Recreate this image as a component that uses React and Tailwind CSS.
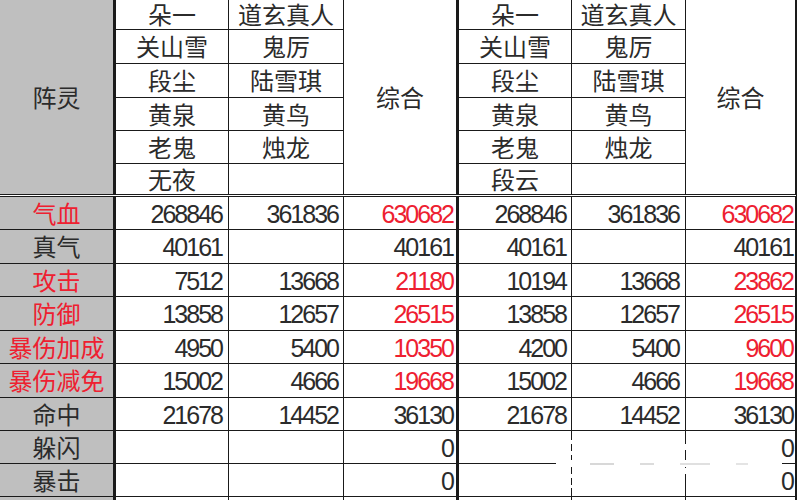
import React from "react";

const RED = "text-[#ee2030]";
const DARK = "text-[#2b2b2b]";

const headLeft = [
  ["朵一", "道玄真人"],
  ["关山雪", "鬼厉"],
  ["段尘", "陆雪琪"],
  ["黄泉", "黄鸟"],
  ["老鬼", "烛龙"],
  ["无夜", ""],
];
const headRight = [
  ["朵一", "道玄真人"],
  ["关山雪", "鬼厉"],
  ["段尘", "陆雪琪"],
  ["黄泉", "黄鸟"],
  ["老鬼", "烛龙"],
  ["段云", ""],
];

const rows = [
  ["气血", true, "268846", "361836", "630682", "268846", "361836", "630682"],
  ["真气", false, "40161", "", "40161", "40161", "", "40161"],
  ["攻击", true, "7512", "13668", "21180", "10194", "13668", "23862"],
  ["防御", true, "13858", "12657", "26515", "13858", "12657", "26515"],
  ["暴伤加成", true, "4950", "5400", "10350", "4200", "5400", "9600"],
  ["暴伤减免", true, "15002", "4666", "19668", "15002", "4666", "19668"],
  ["命中", false, "21678", "14452", "36130", "21678", "14452", "36130"],
  ["躲闪", false, "", "", "0", "", "", "0"],
  ["暴击", false, "", "", "0", "", "", "0"],
  ["", false, "", "", "", "", "", ""],
];

const PADS = ["pr-[6px]", "pr-[5px]", "pr-[3px]", "pr-[5px]", "pr-[6px]", "pr-[2px]"];

function Name({ children, row, col }) {
  return (
    <div
      className={`bg-white flex items-center justify-center text-[24px] leading-none ${DARK} pt-[3px]`}
      style={{ gridRow: row, gridColumn: col }}
    >
      {children}
    </div>
  );
}

function Num({ v, red, idx }) {
  return (
    <div
      className={`bg-white flex items-center justify-end pt-[2px] text-[25px] leading-none tracking-[-2px] ${PADS[idx]} ${
        red ? RED : DARK
      } ${idx === 2 ? "border-r-2 border-[#1a1a1a]" : ""}`}
    >
      {v}
    </div>
  );
}

export default function App() {
  return (
    <div className="relative w-[800px] h-[500px] overflow-hidden bg-white font-['Liberation_Sans','Noto_Sans_CJK_SC',sans-serif]">
      {/* header */}
      <div className="w-[797px] grid grid-cols-[115px_112px_114px_114px_112px_113px_109px] grid-rows-[29px_33px_33px_32px_32px_30px] gap-px bg-[#1a1a1a] bg-clip-padding border-r-2 border-b-[3px] border-double border-[#1a1a1a]">
        <div
          className={`bg-[#bfbfbf] border-r-2 border-[#1a1a1a] flex items-center justify-center text-[24px] leading-none pt-[3px] ${DARK}`}
          style={{ gridRow: "1 / span 6", gridColumn: 1 }}
        >
          阵灵
        </div>
        {headLeft.map((r, i) => (
          <React.Fragment key={"l" + i}>
            <Name row={i + 1} col={2}>{r[0]}</Name>
            <Name row={i + 1} col={3}>{r[1]}</Name>
          </React.Fragment>
        ))}
        <div
          className={`bg-white border-r-2 border-[#1a1a1a] flex items-center justify-center text-[24px] leading-none pt-[3px] ${DARK}`}
          style={{ gridRow: "1 / span 6", gridColumn: 4 }}
        >
          综合
        </div>
        {headRight.map((r, i) => (
          <React.Fragment key={"r" + i}>
            <Name row={i + 1} col={5}>{r[0]}</Name>
            <Name row={i + 1} col={6}>{r[1]}</Name>
          </React.Fragment>
        ))}
        <div
          className={`bg-white flex items-center justify-center text-[24px] leading-none pt-[3px] ${DARK}`}
          style={{ gridRow: "1 / span 6", gridColumn: 7 }}
        >
          综合
        </div>
      </div>

      {/* body */}
      <div className="w-[797px] grid grid-cols-[115px_112px_114px_114px_112px_113px_109px] grid-rows-[32px_33px_32px_33px_32px_33px_32px_32px_32px_12px] gap-px bg-[#1a1a1a] border-r-2 border-[#1a1a1a]">
        {rows.map((r, i) => (
          <React.Fragment key={i}>
            <div
              className={`bg-[#bfbfbf] border-r-2 border-[#1a1a1a] flex items-center justify-center text-[24px] leading-none pt-[3px] ${
                r[1] ? RED : DARK
              }`}
            >
              {r[0]}
            </div>
            {r.slice(2).map((v, j) => (
              <Num key={j} v={v} idx={j} red={r[1] && (j === 2 || j === 5)} />
            ))}
          </React.Fragment>
        ))}
      </div>

      {/* erased watermark smear lying over the grid lines */}
      <div className="absolute left-[556px] top-[460px] w-[226px] h-[7px] bg-white flex items-center gap-[26px] pl-[34px]">
        <div className="w-[24px] h-[2px] bg-[#d8d8d8]" />
        <div className="w-[14px] h-[2px] bg-[#dcdcdc]" />
        <div className="w-[30px] h-[2px] bg-[#e0e0e0]" />
        <div className="w-[12px] h-[2px] bg-[#e4e4e4]" />
      </div>
      <div className="absolute left-[570px] top-[440px] w-[118px] h-[48px] flex justify-between">
        <div className="w-[3px] flex flex-col gap-[7px]">
          <div className="h-[5px] bg-white" />
          <div className="h-[6px] bg-white" />
          <div className="h-[6px]" />
          <div className="h-[6px] bg-white" />
          <div className="h-[4px] bg-white" />
        </div>
        <div className="w-[3px] flex flex-col gap-[18px] pt-[4px]">
          <div className="h-[6px] bg-white" />
          <div className="h-[6px] bg-white" />
        </div>
      </div>
    </div>
  );
}
